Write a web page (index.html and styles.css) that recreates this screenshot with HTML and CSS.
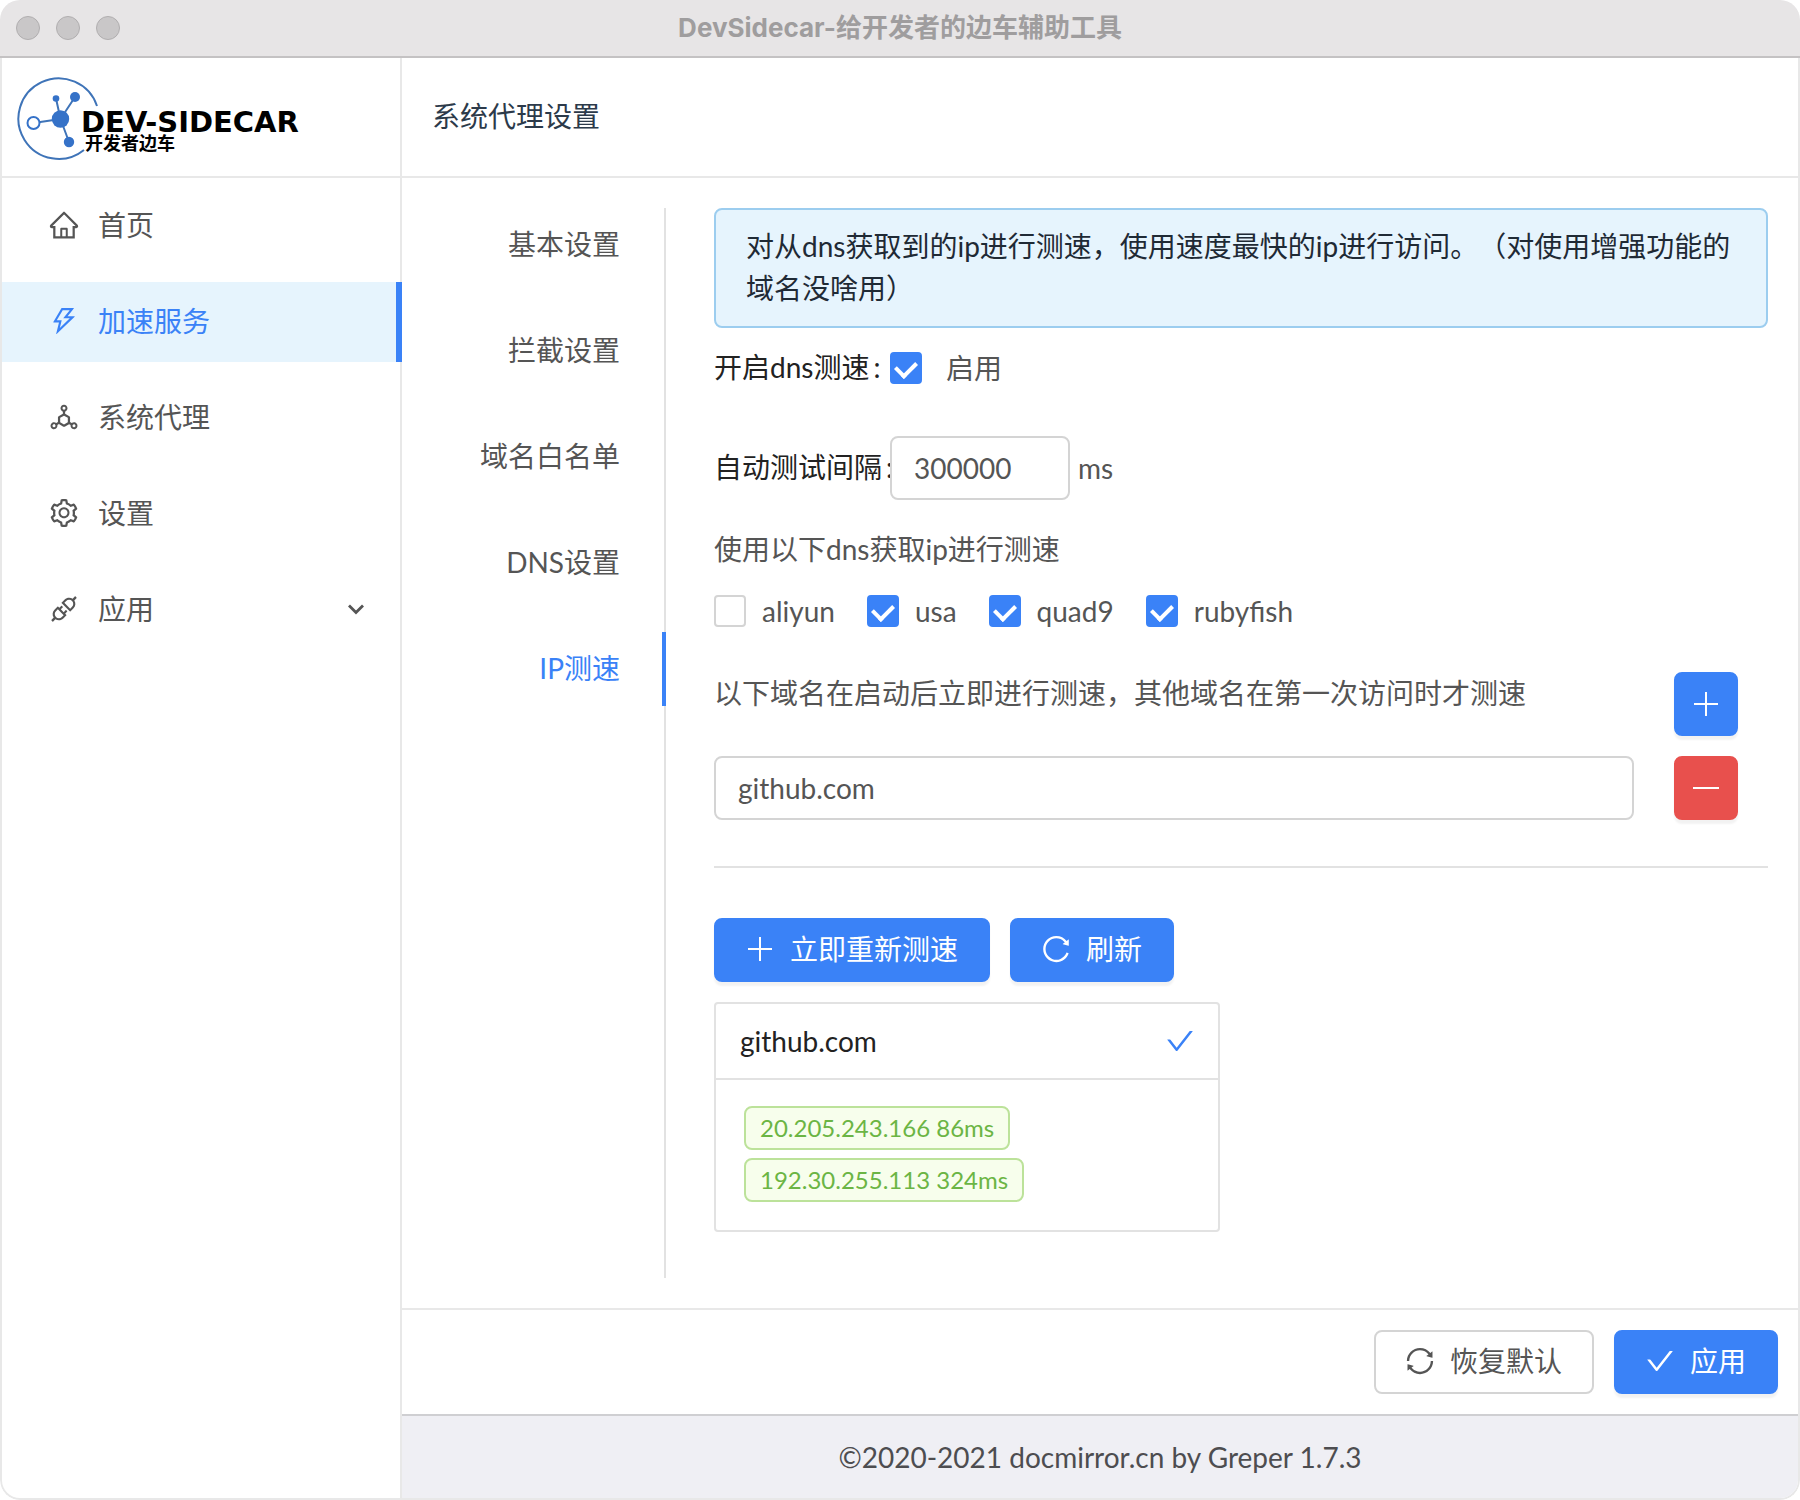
FILE: index.html
```html
<!DOCTYPE html>
<html lang="zh-CN">
<head>
<meta charset="utf-8">
<meta name="viewport" content="width=device-width, initial-scale=1">
<title>DevSidecar-给开发者的边车辅助工具</title>
<link rel="stylesheet" href="styles.css">
</head>
<body>
<svg class="sprite" aria-hidden="true">
  <symbol id="i-home" viewBox="0 0 1024 1024"><path d="M946.5 505L560.1 118.8l-25.9-25.9a31.5 31.5 0 0 0-44.4 0L77.5 505a63.9 63.9 0 0 0-18.8 46c.4 35.2 29.7 63.3 64.9 63.3h42.5V940h691.8V614.3h43.4c17.1 0 33.2-6.7 45.3-18.8a63.6 63.6 0 0 0 18.7-45.3c0-17-6.7-33.1-18.8-45.2zM568 868H456V664h112v204zm217.9-325.7V868H632V640c0-22.1-17.9-40-40-40H432c-22.1 0-40 17.9-40 40v228H238.1V542.3h-96l370-369.7 23.1 23.1L882 542.3h-96.1z"/></symbol>
  <symbol id="i-bolt" viewBox="0 0 1024 1024"><path d="M848 359.3H627.7L825.8 109c4.1-5.3.4-13-6.3-13H436c-2.8 0-5.5 1.5-6.9 4L170 547.5c-3.1 5.3.7 12 6.9 12h174.4l-89.4 357.6c-1.9 7.8 7.5 13.3 13.3 7.7L853.5 373c5.2-4.9 1.7-13.7-5.5-13.7zM378.2 732.5l60.3-241H281.1l189.6-327.4h224.6L487 427.4h211L378.2 732.5z"/></symbol>
  <symbol id="i-unit" viewBox="0 0 1024 1024"><path d="M888.3 693.2c-42.5-24.6-94.3-18-129.2 12.8l-53-30.7V523.6c0-15.7-8.4-30.3-22-38.1l-136-78.3v-67.1c44.2-15 76-56.8 76-106.1 0-61.9-50.1-112-112-112s-112 50.1-112 112c0 49.3 31.8 91.1 76 106.1v67.1l-136 78.3c-13.6 7.8-22 22.4-22 38.1v151.6l-53 30.7c-34.9-30.8-86.8-37.4-129.2-12.8-53.5 31-71.7 99.4-41 152.9 30.8 53.5 98.9 71.9 152.2 41 42.5-24.6 62.7-73 53.6-118.8l48.7-28.3 140.6 81c6.8 3.9 14.4 5.9 22 5.9s15.2-2 22-5.9L674.5 740l48.7 28.3c-9.1 45.7 11.2 94.2 53.6 118.8 53.3 30.9 121.5 12.6 152.2-41 30.8-53.6 12.6-122-40.7-152.9zm-673 138.4a47.6 47.6 0 0 1-65.2-17.6c-13.2-22.9-5.4-52.3 17.5-65.5a47.6 47.6 0 0 1 65.2 17.6c13.2 22.9 5.4 52.3-17.5 65.5zM464 234a48.01 48.01 0 0 1 96 0 48.01 48.01 0 0 1-96 0zm170 446.2l-122 70.3-122-70.3V539.8l122-70.3 122 70.3v140.4zm239.9 133.9c-13.2 22.9-42.4 30.8-65.2 17.6-22.8-13.2-30.7-42.6-17.5-65.5s42.4-30.8 65.2-17.6c22.9 13.2 30.7 42.5 17.5 65.5z"/></symbol>
  <symbol id="i-gear" viewBox="0 0 1024 1024"><path d="M924.8 625.7l-65.5-56c3.1-19 4.7-38.4 4.7-57.8s-1.6-38.8-4.7-57.8l65.5-56a32.03 32.03 0 0 0 9.3-35.2l-.9-2.6a443.74 443.74 0 0 0-79.7-137.9l-1.8-2.1a32.12 32.12 0 0 0-35.1-9.5l-81.3 28.9c-30-24.6-63.5-44-99.7-57.6l-15.7-85a32.05 32.05 0 0 0-25.8-25.7l-2.7-.5c-52.1-9.4-106.9-9.4-159 0l-2.7.5a32.05 32.05 0 0 0-25.8 25.7l-15.8 85.4a351.86 351.86 0 0 0-99 57.4l-81.9-29.1a32 32 0 0 0-35.1 9.5l-1.8 2.1a446.02 446.02 0 0 0-79.7 137.9l-.9 2.6c-4.5 12.5-.8 26.5 9.3 35.2l66.3 56.6c-3.1 18.8-4.6 38-4.6 57.1 0 19.2 1.5 38.4 4.6 57.1L99 625.5a32.03 32.03 0 0 0-9.3 35.2l.9 2.6c18.1 50.4 44.9 96.9 79.7 137.9l1.8 2.1a32.12 32.12 0 0 0 35.1 9.5l81.9-29.1c29.8 24.5 63.1 43.9 99 57.4l15.8 85.4a32.05 32.05 0 0 0 25.8 25.7l2.7.5a449.4 449.4 0 0 0 159 0l2.7-.5a32.05 32.05 0 0 0 25.8-25.7l15.7-85a350 350 0 0 0 99.7-57.6l81.3 28.9a32 32 0 0 0 35.1-9.5l1.8-2.1c34.8-41.1 61.6-87.5 79.7-137.9l.9-2.6c4.5-12.3.8-26.3-9.3-35zM788.3 465.9c2.5 15.1 3.8 30.6 3.8 46.1s-1.3 31-3.8 46.1l-6.6 40.1 74.7 63.9a370.03 370.03 0 0 1-42.6 73.6L721 702.8l-31.4 25.8c-23.9 19.6-50.5 35-79.3 45.8l-38.1 14.3-17.9 97a377.5 377.5 0 0 1-85 0l-17.9-97.2-37.8-14.5c-28.5-10.8-55-26.2-78.7-45.7l-31.4-25.9-93.4 33.2c-17-22.9-31.2-47.6-42.6-73.6l75.5-64.5-6.5-40c-2.4-14.9-3.7-30.3-3.7-45.5 0-15.3 1.2-30.6 3.7-45.5l6.5-40-75.5-64.5c11.3-26.1 25.6-50.7 42.6-73.6l93.4 33.2 31.4-25.9c23.7-19.5 50.2-34.9 78.7-45.7l37.9-14.3 17.9-97.2c28.1-3.2 56.8-3.2 85 0l17.9 97 38.1 14.3c28.7 10.8 55.4 26.2 79.3 45.8l31.4 25.8 92.8-32.9c17 22.9 31.2 47.6 42.6 73.6L781.8 426l6.5 39.9zM512 326c-97.2 0-176 78.8-176 176s78.8 176 176 176 176-78.8 176-176-78.8-176-176-176zm79.2 255.2A111.6 111.6 0 0 1 512 614c-29.9 0-58-11.7-79.2-32.8A111.6 111.6 0 0 1 400 502c0-29.9 11.7-58 32.8-79.2C454 401.6 482.1 390 512 390c29.9 0 58 11.6 79.2 32.8A111.6 111.6 0 0 1 624 502c0 29.9-11.7 58-32.8 79.2z"/></symbol>
  <symbol id="i-api" viewBox="0 0 1024 1024"><path d="M917.7 148.8l-42.4-42.4c-1.6-1.6-3.6-2.3-5.7-2.3s-4.1.8-5.7 2.3l-76.1 76.1a199.27 199.27 0 0 0-112.1-34.3c-51.2 0-102.4 19.5-141.5 58.6L432.3 308.7a8.03 8.03 0 0 0 0 11.3L704 591.7c1.6 1.6 3.6 2.3 5.7 2.3 2 0 4.1-.8 5.7-2.3l101.9-101.9c68.9-69 77-175.7 24.3-253.5l76.1-76.1c3.1-3.2 3.1-8.3 0-11.4zM769.1 441.7l-59.4 59.4-186.8-186.8 59.4-59.4c24.9-24.9 58.1-38.7 93.4-38.7 35.3 0 68.4 13.7 93.4 38.7 24.9 24.9 38.7 58.1 38.7 93.4 0 35.3-13.8 68.4-38.7 93.4zm-190.2 105a8.03 8.03 0 0 0-11.3 0L501 613.3 410.7 523l66.7-66.7c3.1-3.1 3.1-8.2 0-11.3L441 408.6a8.03 8.03 0 0 0-11.3 0L363 475.3l-43-43a7.85 7.85 0 0 0-5.7-2.3c-2 0-4.1.8-5.7 2.3L206.8 534.2c-68.9 69-77 175.7-24.3 253.5l-76.1 76.1a8.03 8.03 0 0 0 0 11.3l42.4 42.4c1.6 1.6 3.6 2.3 5.7 2.3s4.1-.8 5.7-2.3l76.1-76.1c33.7 22.9 72.9 34.3 112.1 34.3 51.2 0 102.4-19.5 141.5-58.6l101.9-101.9c3.1-3.1 3.1-8.2 0-11.3l-43-43 66.7-66.7c3.1-3.1 3.1-8.2 0-11.3l-36.6-36.2zM441.7 769.1a131.32 131.32 0 0 1-93.4 38.7c-35.3 0-68.4-13.7-93.4-38.7a131.32 131.32 0 0 1-38.7-93.4c0-35.3 13.7-68.4 38.7-93.4l59.4-59.4 186.8 186.8-59.4 59.4z"/></symbol>
  <symbol id="i-reload" viewBox="0 0 1024 1024"><path d="M909.1 209.3l-56.4 44.1C775.8 155.1 656.2 92 521.9 92 290 92 102.3 279.5 102 511.5 101.7 743.7 289.8 932 521.9 932c181.3 0 335.8-115 394.6-276.1 1.5-4.2-.7-8.9-4.9-10.3l-56.7-19.5a8 8 0 0 0-10.1 4.8c-1.8 5-3.8 10-5.9 14.9-17.3 41-42.1 77.8-73.7 109.4A344.77 344.77 0 0 1 655.9 829c-42.3 17.9-87.4 27-133.8 27-46.5 0-91.5-9.1-133.8-27A341.5 341.5 0 0 1 279 755.2a342.16 342.16 0 0 1-73.7-109.4c-17.9-42.4-27-87.4-27-133.9s9.1-91.5 27-133.9c17.3-41 42.1-77.8 73.7-109.4 31.6-31.6 68.4-56.4 109.3-73.8 42.3-17.9 87.4-27 133.8-27 46.5 0 91.5 9.1 133.8 27a341.5 341.5 0 0 1 109.3 73.8c9.9 9.9 19.2 20.4 27.8 31.4l-60.2 47a8 8 0 0 0 3 14.1l175.6 43c5 1.2 9.9-2.6 9.9-7.7l.8-180.9c-.1-6.6-7.8-10.3-13-6.2z"/></symbol>
  <symbol id="i-sync" viewBox="0 0 1024 1024"><path d="M168 504.2c1-43.7 10-86.1 26.9-126 17.3-41 42.1-77.7 73.7-109.4S337 212.3 378 195c42.4-17.9 87.4-27 133.9-27s91.5 9.1 133.8 27A341.5 341.5 0 0 1 755 268.8c9.9 9.9 19.2 20.4 27.8 31.4l-60.2 47a8 8 0 0 0 3 14.1l175.7 43c5 1.2 9.9-2.6 9.9-7.7l.8-180.9c0-6.7-7.7-10.5-12.9-6.3l-56.4 44.1C765.8 155.1 646.2 92 511.8 92 282.7 92 96.3 275.6 92 503.8a8 8 0 0 0 8 8.2h60c4.4 0 7.9-3.5 8-7.8zm756 7.8h-60c-4.4 0-7.9 3.5-8 7.8-1 43.7-10 86.1-26.9 126-17.3 41-42.1 77.8-73.7 109.4A342.45 342.45 0 0 1 512.1 856a342.24 342.24 0 0 1-243.2-100.8c-9.9-9.9-19.2-20.4-27.8-31.4l60.2-47a8 8 0 0 0-3-14.1l-175.7-43c-5-1.2-9.9 2.6-9.9 7.7l-.7 181c0 6.7 7.7 10.5 12.9 6.3l56.4-44.1C258.2 868.9 377.8 932 512.2 932c229.2 0 415.5-183.7 419.8-411.8a8 8 0 0 0-8-8.2z"/></symbol>
  <symbol id="i-check" viewBox="0 0 1024 1024"><path d="M912 190h-69.9c-9.8 0-19.1 4.5-25.1 12.2L404.7 724.5 207 474a32 32 0 0 0-25.1-12.2H112c-6.7 0-10.4 7.7-6.3 12.9l273.9 347c12.8 16.2 37.4 16.2 50.3 0l488.4-618.9c4.1-5.1.4-12.8-6.3-12.8z"/></symbol>
  <symbol id="i-plus" viewBox="0 0 32 32"><path d="M15 4h2v11h11v2H17v11h-2V17H4v-2h11z"/></symbol>
  <symbol id="i-minus" viewBox="0 0 32 32"><path d="M3 15h26v2H3z"/></symbol>
  <symbol id="i-down" viewBox="0 0 32 32"><path d="M9 12.500l7 7 7-7" fill="none" stroke="currentColor" stroke-width="2.800"/></symbol>
</svg>

<div class="window">
  <header class="titlebar">
    <div class="lights"><i></i><i></i><i></i></div>
    <h1>DevSidecar-给开发者的边车辅助工具</h1>
    <div></div>
  </header>

  <div class="shell">
    <aside class="sidebar">
      <div class="brand">
        <svg class="logo" viewBox="16 74 290 88" role="img" aria-label="DEV-SIDECAR 开发者边车">
          <g fill="none" stroke="#3f74b8" stroke-width="2">
            <path d="M97 106A40.300 40.300 0 1 0 84 150"/>
            <path d="M60.500 119L33.500 123M60.500 119L56 98.500M60.500 119L75 97M60.500 119L69 142"/>
          </g>
          <g fill="#3572c8">
            <circle cx="60.500" cy="119" r="8.700"/>
            <circle cx="56" cy="98.500" r="3.300"/>
            <circle cx="75" cy="97" r="5"/>
            <circle cx="69" cy="142" r="5.200"/>
          </g>
          <circle cx="33.500" cy="123" r="6" fill="#fff" stroke="#3572c8" stroke-width="2"/>
          <text class="logo-name" x="81" y="132">DEV-SIDECAR</text>
          <text class="logo-sub" x="85" y="150">开发者边车</text>
        </svg>
      </div>
      <nav class="menu">
        <a href="#home"><svg class="icon"><use href="#i-home"/></svg>首页</a>
        <a href="#server" class="active" aria-current="page"><svg class="icon"><use href="#i-bolt"/></svg>加速服务</a>
        <a href="#proxy"><svg class="icon"><use href="#i-unit"/></svg>系统代理</a>
        <a href="#setting"><svg class="icon"><use href="#i-gear"/></svg>设置</a>
        <a href="#apps"><svg class="icon"><use href="#i-api"/></svg>应用<svg class="icon arrow"><use href="#i-down"/></svg></a>
      </nav>
    </aside>

    <main class="main">
      <h2 class="page-title">系统代理设置</h2>

      <div class="content">
        <nav class="tabs">
          <a href="#base">基本设置</a>
          <a href="#intercept">拦截设置</a>
          <a href="#whitelist">域名白名单</a>
          <a href="#dns">DNS设置</a>
          <a href="#speed" class="active" aria-current="true">IP测速</a>
        </nav>

        <section class="pane">
          <div class="alert">对从dns获取到的ip进行测速，使用速度最快的ip进行访问。（对使用增强功能的域名没啥用）</div>

          <div class="field">
            <label class="label" for="enable">开启dns测速</label>
            <label class="check wide"><input type="checkbox" id="enable" checked>启用</label>
          </div>

          <div class="field">
            <label class="label" for="interval">自动测试间隔</label>
            <input class="input interval" id="interval" type="text" value="300000">
            <span class="unit">ms</span>
          </div>

          <p class="hint">使用以下dns获取ip进行测速</p>
          <div class="checks">
            <label class="check"><input type="checkbox">aliyun</label>
            <label class="check"><input type="checkbox" checked>usa</label>
            <label class="check"><input type="checkbox" checked>quad9</label>
            <label class="check"><input type="checkbox" checked>rubyfish</label>
          </div>

          <div class="row">
            <p>以下域名在启动后立即进行测速，其他域名在第一次访问时才测速</p>
            <button class="btn primary square" type="button" aria-label="添加"><svg class="icon"><use href="#i-plus"/></svg></button>
          </div>
          <div class="row">
            <input class="input" type="text" value="github.com" aria-label="域名">
            <button class="btn danger square" type="button" aria-label="删除"><svg class="icon"><use href="#i-minus"/></svg></button>
          </div>

          <hr>

          <div class="actions">
            <button class="btn primary" type="button"><svg class="icon"><use href="#i-plus"/></svg>立即重新测速</button>
            <button class="btn primary" type="button"><svg class="icon"><use href="#i-reload"/></svg>刷新</button>
          </div>

          <article class="card">
            <h3>github.com<svg class="icon"><use href="#i-check"/></svg></h3>
            <div class="tags">
              <span>20.205.243.166 86ms</span>
              <span>192.30.255.113 324ms</span>
            </div>
          </article>
        </section>
      </div>

      <div class="toolbar">
        <button class="btn" type="button"><svg class="icon"><use href="#i-sync"/></svg>恢复默认</button>
        <button class="btn primary" type="button"><svg class="icon"><use href="#i-check"/></svg>应用</button>
      </div>
      <footer class="footer">©2020-2021 docmirror.cn by Greper 1.7.3</footer>
    </main>
  </div>
</div>
</body>
</html>
```
FILE: styles.css
```css
:root {
  --blue: #3a82f7;
  --red: #e8504d;
  --line: #e8e8e8;
  --border: #d4d4d4;
  --text: #555;
  --strong: #222;
}

* {
  box-sizing: border-box;
}

body {
  margin: 0;
  background: #fff;
  color: var(--text);
  font: 28px/42px Lato, "Noto Sans CJK SC", sans-serif;
  text-spacing-trim: space-all;
}

h1, h2, h3, p {
  margin: 0;
  font-weight: 400;
}

a {
  color: inherit;
  text-decoration: none;
}

.sprite {
  display: none;
}

.icon {
  flex: none;
  width: 32px;
  height: 32px;
  fill: currentColor;
}

.window {
  display: flex;
  flex-direction: column;
  min-height: 100vh;
  border-radius: 20px;
  overflow: hidden;
}

/* title bar */
.titlebar {
  display: grid;
  grid-template-columns: 1fr auto 1fr;
  align-items: center;
  height: 58px;
  padding: 0 16px;
  background: #e7e5e6;
  border-bottom: 2px solid #c4c2c3;
}

.titlebar h1 {
  color: #9f9d9e;
  font: bold 26px/40px Inter, "Noto Sans CJK SC", sans-serif;
}

.lights {
  display: flex;
  gap: 16px;
}

.lights i {
  width: 24px;
  height: 24px;
  border: 1px solid #b0aeaf;
  border-radius: 50%;
  background: #c9c7c8;
}

.shell {
  flex: 1;
  display: flex;
  border: 2px solid var(--line);
  border-top: 0;
  border-radius: 0 0 20px 20px;
  overflow: hidden;
}

/* sidebar */
.sidebar {
  flex: none;
  width: 400px;
  border-right: 2px solid var(--line);
}

.brand {
  height: 120px;
  padding: 16px 14px;
  border-bottom: 2px solid var(--line);
}

.logo {
  display: block;
  width: 290px;
  height: 88px;
}

.logo-name {
  font: bold 29px "DejaVu Sans", sans-serif;
}

.logo-sub {
  font: bold 18px "Noto Sans CJK SC", sans-serif;
}

.menu {
  display: flex;
  flex-direction: column;
  gap: 16px;
  padding-top: 8px;
  margin-right: -2px;
}

.menu a {
  display: flex;
  align-items: center;
  gap: 18px;
  height: 80px;
  padding: 0 24px 2px 46px;
  border-right: 6px solid transparent;
}

.menu .active {
  color: var(--blue);
  background: #e6f4fd;
  border-color: var(--blue);
}

.menu .arrow {
  margin-left: auto;
}

/* main column */
.main {
  flex: 1;
  display: flex;
  flex-direction: column;
  min-width: 0;
}

.page-title {
  padding: 37px 30px 39px;
  border-bottom: 2px solid var(--line);
  color: #2c3a4a;
  font-size: 28px;
}

.content {
  flex: 1;
  display: flex;
  gap: 48px;
  padding: 30px;
  padding-left: 0;
}

.tabs {
  flex: none;
  display: flex;
  flex-direction: column;
  gap: 32px;
  width: 264px;
  border-right: 2px solid #e2e2e2;
  text-align: right;
}

.tabs a {
  padding: 15px 44px 17px 0;
}

.tabs .active {
  margin-right: -2px;
  padding-right: 42px;
  border-right: 4px solid var(--blue);
  color: var(--blue);
}

.pane {
  flex: 1;
  min-width: 0;
}

.alert {
  padding: 15px 30px 17px;
  border: 2px solid #9ccdef;
  border-radius: 8px;
  background: #e6f4fd;
  color: #1f2a35;
}

.field {
  display: flex;
  align-items: center;
  height: 80px;
  margin-bottom: 20px;
}

.label {
  flex: none;
  width: 176px;
  padding-bottom: 2px;
  overflow: hidden;
  white-space: nowrap;
  color: var(--strong);
}

.label::after {
  content: ":";
  margin-left: 4px;
}

.input {
  flex: 1;
  min-width: 0;
  height: 64px;
  padding: 0 22px;
  border: 2px solid var(--border);
  border-radius: 8px;
  background: #fff;
  color: var(--text);
  font: inherit;
}

.interval {
  flex: none;
  width: 180px;
}

.unit {
  margin-left: 8px;
}

.check {
  display: flex;
  align-items: center;
  gap: 16px;
}

.check.wide {
  gap: 24px;
}

.check input {
  appearance: none;
  width: 32px;
  height: 32px;
  margin: 0;
  border: 2px solid var(--border);
  border-radius: 4px;
  background: #fff;
}

.check input:checked {
  display: grid;
  place-items: center;
  border-color: var(--blue);
  background: var(--blue);
}

.check input:checked::after {
  content: "";
  width: 10px;
  height: 16px;
  margin-bottom: 2px;
  border: solid #fff;
  border-width: 0 4px 4px 0;
  transform: rotate(45deg);
}

.checks {
  display: flex;
  gap: 32px;
  height: 82px;
  margin-bottom: 20px;
}

.row {
  display: flex;
  gap: 40px;
  margin-bottom: 20px;
  padding-right: 30px;
}

.row p {
  flex: 1;
}

.btn {
  display: flex;
  align-items: center;
  gap: 14px;
  height: 64px;
  padding: 0 30px 2px 28px;
  border: 2px solid var(--border);
  border-radius: 8px;
  background: #fff;
  color: var(--text);
  font: inherit;
  white-space: nowrap;
}

.btn.primary,
.btn.danger {
  border-color: var(--blue);
  background: var(--blue);
  box-shadow: 0 4px 2px rgba(0, 0, 0, 0.05);
  color: #fff;
}

.btn.danger {
  border-color: var(--red);
  background: var(--red);
}

.btn.square {
  flex: none;
  justify-content: center;
  width: 64px;
  padding: 0;
}

hr {
  height: 2px;
  margin: 46px 0 50px;
  border: 0;
  background: #e2e2e2;
}

.actions {
  display: flex;
  gap: 20px;
  margin-bottom: 20px;
}

.card {
  max-width: 506px;
  margin-bottom: 46px;
  border: 2px solid #e2e2e2;
  border-radius: 4px;
}

.card h3 {
  display: flex;
  align-items: center;
  justify-content: space-between;
  height: 76px;
  padding: 0 22px 0 24px;
  border-bottom: 2px solid #e2e2e2;
  color: var(--strong);
  font-size: 28px;
}

.card h3 .icon {
  color: var(--blue);
}

.tags {
  display: flex;
  flex-direction: column;
  align-items: flex-start;
  gap: 8px;
  padding: 26px 28px 28px;
}

.tags span {
  padding: 0 14px;
  border: 2px solid #bce29a;
  border-radius: 8px;
  background: #f7feec;
  color: #6bb544;
  font-size: 24px;
  line-height: 40px;
}

.toolbar {
  display: flex;
  justify-content: flex-end;
  gap: 20px;
  padding: 20px;
  border-top: 2px solid var(--line);
}

.footer {
  padding: 20px;
  border-top: 2px solid #cfcfd2;
  background: #efeff4;
  text-align: center;
  color: #4d4d50;
}
```
